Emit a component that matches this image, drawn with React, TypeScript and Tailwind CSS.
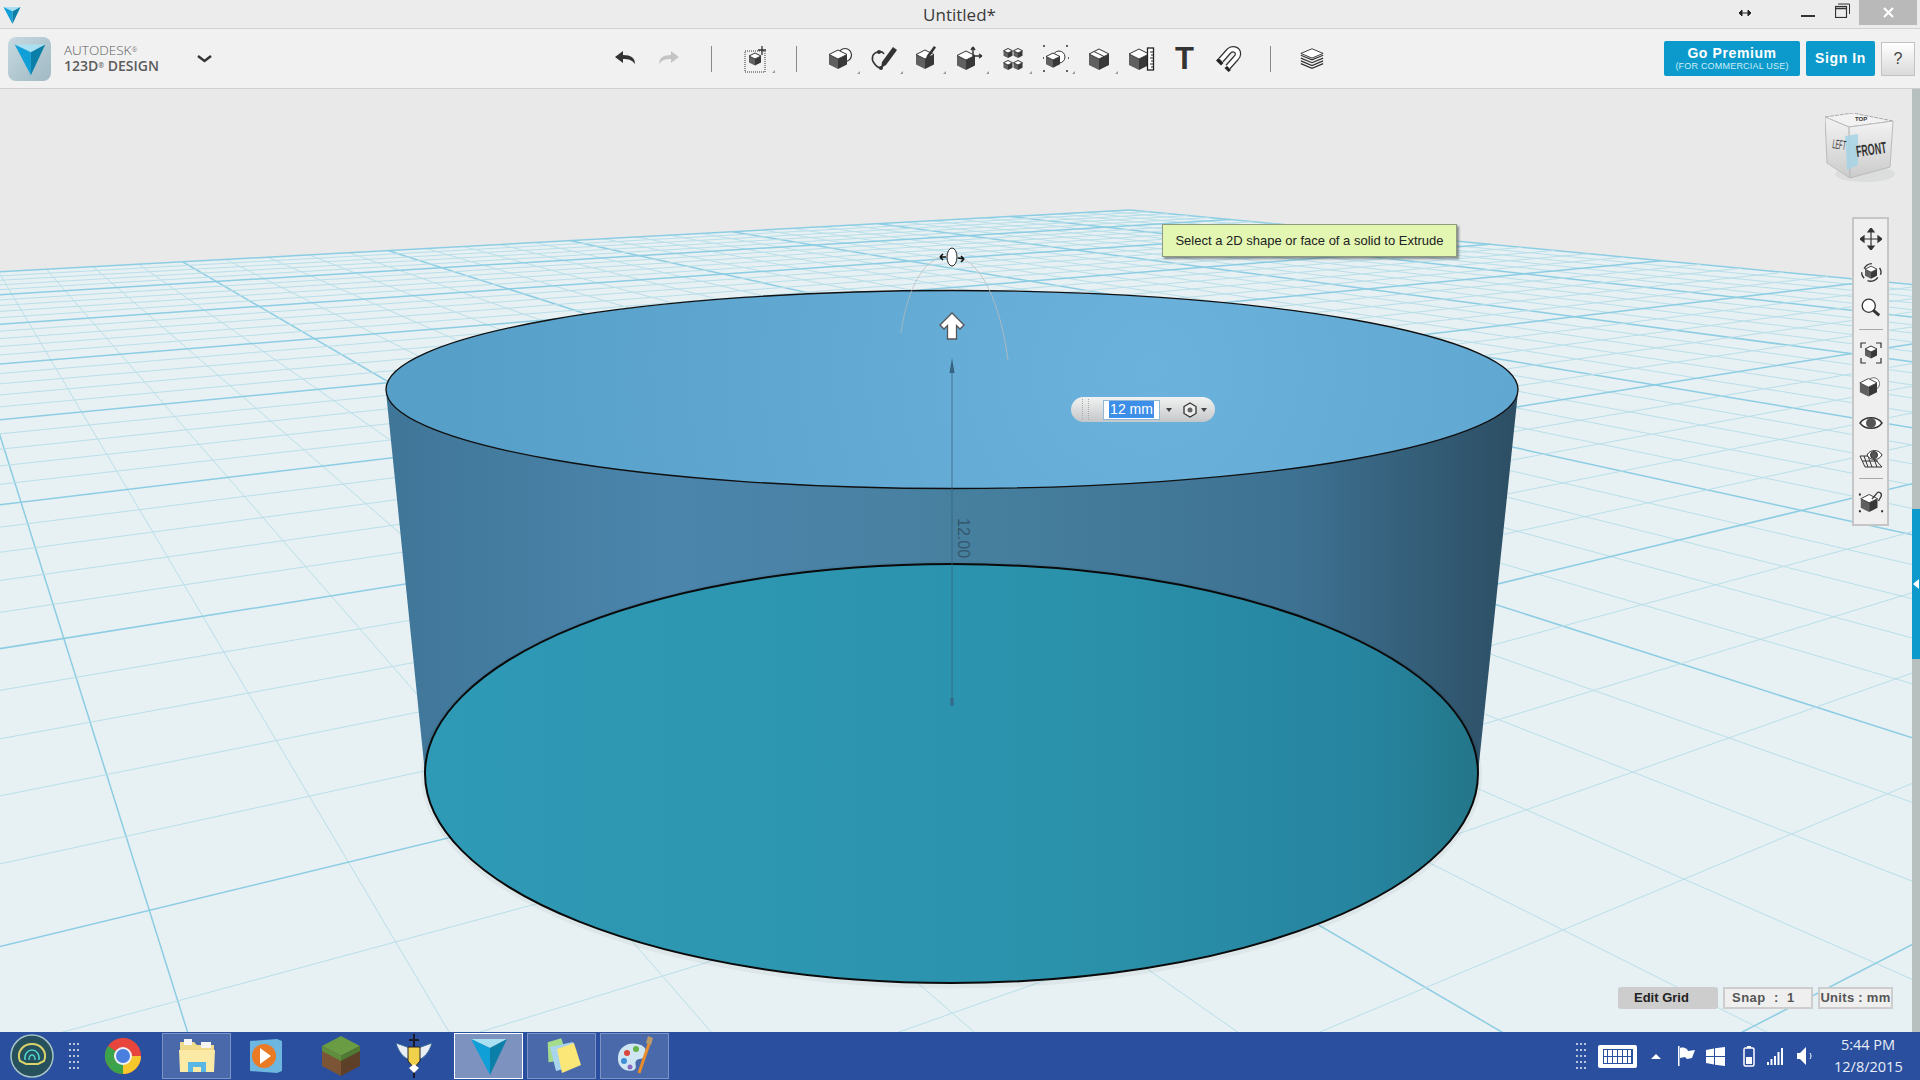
import React from 'react';

// grid plane homography, fitted by eye from the reference
const P0 = [1130, 210];
const VR = [3600, 75];
const VL = [-108, 92];
const A = -0.0462;
const B = -0.0751;

const project = (u: number, v: number) => {
  const tu = A * u;
  const tv = B * v;
  const w = 1 + tu + tv;
  return [(P0[0] + tu * VR[0] + tv * VL[0]) / w, (P0[1] + tu * VR[1] + tv * VL[1]) / w];
};

const gridLines = () => {
  const lines: { d: string; major: boolean }[] = [];
  for (let i = 0; i * 0.2 * -A < 0.97; i++) {
    const u = i * 0.2;
    const s = project(u, 0);
    const e = project(u, (0.98 + A * u) / -B);
    lines.push({ d: `M${s[0]} ${s[1]}L${e[0]} ${e[1]}`, major: i % 5 === 0 });
  }
  for (let i = 0; i * 0.2 * -B < 0.97; i++) {
    const v = i * 0.2;
    const s = project(0, v);
    const e = project((0.98 + B * v) / -A, v);
    lines.push({ d: `M${s[0]} ${s[1]}L${e[0]} ${e[1]}`, major: i % 5 === 0 });
  }
  return lines;
};

const Cube = ({ x, y, s }: { x: number; y: number; s: number }) => (
  <g strokeLinejoin="round">
    <polygon points={`${x - s},${y - s / 2} ${x},${y} ${x},${y + s * 1.1} ${x - s},${y + s * 0.6}`} fill="#606060" />
    <polygon points={`${x + s},${y - s / 2} ${x},${y} ${x},${y + s * 1.1} ${x + s},${y + s * 0.6}`} fill="#383838" />
    <polygon points={`${x},${y - s} ${x + s},${y - s / 2} ${x},${y} ${x - s},${y - s / 2}`} fill="#fff" stroke="#333" strokeWidth="1" />
  </g>
);

const Icon = ({ children, size = 28 }: { children: React.ReactNode; size?: number }) => (
  <svg width={size} height={size} viewBox="0 0 28 28" fill="none">
    {children}
  </svg>
);

const Logo = ({ w, h }: { w: number; h: number }) => (
  <svg width={w} height={h} viewBox="0 0 40 42">
    <polygon points="2,4 38,4 21,13" fill="#a9e1f2" />
    <polygon points="2,4 21,13 21,40" fill="#109fd6" />
    <polygon points="38,4 21,13 21,40" fill="#0c7fa8" />
  </svg>
);

const toolIcons = [
  // primitives
  <Icon key="a">
    <circle cx="18" cy="10" r="6.5" fill="#fff" stroke="#333" strokeWidth="1.2" />
    <Cube x={11} y={14} s={9} />
  </Icon>,
  // sketch
  <Icon key="b">
    <path d="M8 7C2 8 1 14 4 18c2 3 4 5 7 5" stroke="#333" strokeWidth="1.6" />
    <path d="M8 7c3-1 5 0 6 2" stroke="#333" strokeWidth="1.6" />
    <circle cx="9" cy="7" r="2" fill="#333" />
    <circle cx="11" cy="23" r="2" fill="#333" />
    <path d="M23 2l4 3-11 15-5 3 1-6z" fill="#333" />
  </Icon>,
  // construct
  <Icon key="c">
    <Cube x={12} y={14} s={9} />
    <path d="M21 1l2 1.500-7 10-3 1 1-3z" fill="#333" />
  </Icon>,
  // modify
  <Icon key="d">
    <Cube x={10} y={15} s={9} />
    <path d="M17 11V2M17 2l-2 3M17 2l2 3M17 11h9M26 11l-3-2M26 11l-3 2" stroke="#333" strokeWidth="1.4" />
  </Icon>,
  // pattern
  <Icon key="e">
    <Cube x={9} y={8} s={4.5} />
    <Cube x={19} y={8} s={4.5} />
    <Cube x={9} y={20} s={4.5} />
    <Cube x={19} y={20} s={4.5} />
  </Icon>,
  // grouping
  <Icon key="f">
    <circle cx="17" cy="12" r="6" fill="#fff" stroke="#333" strokeWidth="1" />
    <Cube x={11} y={15} s={7} />
    <path d="M1 1h3M24 1h3M1 26h3M24 26h2M1 13h1M26 13h1" stroke="#333" strokeWidth="1.6" strokeDasharray="2 1" />
  </Icon>,
  // combine
  <Icon key="g">
    <Cube x={14} y={14} s={10} />
    <path d="M9 6.500l10 5" stroke="#333" strokeWidth="1" />
  </Icon>,
  // measure
  <Icon key="h">
    <Cube x={11} y={14} s={10} />
    <rect x="19.500" y="3" width="6" height="22" fill="#fff" stroke="#222" strokeWidth="1.3" />
    <path d="M22 7h3M23 10h2M22 13h3M23 16h2M22 19h3M23 22h2" stroke="#222" />
  </Icon>,
  // text
  <span key="i" className="font-['Liberation_Sans'] text-[31px] leading-[28px] font-bold text-[#333]">T</span>,
  // snap
  <Icon key="j">
    <path d="M7 15L15 6c3-3 9-2 9 3 0 2-1 3-2 4l-8 9" stroke="#333" strokeWidth="6.5" />
    <path d="M7 15L15 6c3-3 9-2 9 3 0 2-1 3-2 4l-8 9" stroke="#fff" strokeWidth="4" />
    <path d="M4.500 13l5 5-2.500 2.500-5-5zM13 21l4 4-2.500 2-4-4z" fill="#222" />
  </Icon>,
];

const HasMenu = [true, true, true, true, true, true, true, false, false, false];

const Title = () => (
  <div className="relative flex h-[29px] items-center justify-center border-b border-[#d2d2d2] bg-[#ececec]">
    <div className="absolute top-[5px] left-[2px]">
      <Logo w={20} h={20} />
    </div>
    <span className="mt-[2px] ml-[-1px] text-[17px] text-[#3b3b3b]">Untitled*</span>
    <div className="absolute top-0 right-[3px] flex h-[25px] items-center">
      <svg width="14" height="8" viewBox="0 0 14 8">
        <path d="M1 4h12M1 4l3-3v6zM13 4l-3-3v6z" fill="#222" stroke="#222" />
      </svg>
      <div className="mt-[7px] ml-[49px] h-[2px] w-[14px] bg-[#333]" />
      <svg className="ml-[20px] mt-[-4px]" width="15" height="15" viewBox="0 0 15 15" fill="none" stroke="#333">
        <rect x="0.500" y="3.500" width="11" height="11" strokeWidth="1.2" />
        <path d="M0.500 5.500h11" strokeWidth="1.5" />
        <path d="M3 1h11.500v10" />
      </svg>
      <div className="ml-[9px] flex h-[25px] w-[58px] items-center justify-center bg-[#b9b9b9]">
        <svg width="11" height="11" viewBox="0 0 11 11" stroke="#fff" strokeWidth="2.2">
          <path d="M1 1l9 9M10 1l-9 9" />
        </svg>
      </div>
    </div>
  </div>
);

const Toolbar = () => (
  <div className="flex h-[60px] items-center border-b border-[#cfcfcf] bg-[#f1f1f1]">
    <div className="ml-2 flex h-[44px] w-[43px] items-center justify-center rounded-lg bg-gradient-to-br from-[#c7d9e0] to-[#9fb9c4]">
      <Logo w={34} h={36} />
    </div>
    <div className="ml-[13px] w-[133px] text-[#5c5c5c]">
      <div className="text-[13.5px] leading-[15px] font-light">AUTODESK<sup className="text-[7px]">®</sup></div>
      <div className="text-[14px] leading-[16px] font-semibold">123D<sup className="text-[7px]">®</sup> DESIGN</div>
    </div>
    <svg width="15" height="8" viewBox="0 0 15 8" fill="none" stroke="#333" strokeWidth="2.4">
      <path d="M1 1l6.500 5L14 1" />
    </svg>
    <svg className="ml-[403px] mt-[-2px]" width="22" height="13" viewBox="0 0 22 13">
      <path d="M8 0L0 6l8 6V8c6 0 9 1 12 5 0-6-4-9-12-9z" fill="#333" />
    </svg>
    <svg className="ml-[20px] mt-[-2px]" width="22" height="13" viewBox="0 0 22 13">
      <path d="M14 0l8 6-8 6V8C8 8 5 9 2 13c0-6 4-9 12-9z" fill="#c4c4c4" />
    </svg>
    <div className="ml-[32px] h-[26px] w-px bg-[#8a8a8a]" />
    <div className="relative ml-[32px] flex w-[24px] justify-center">
      <svg width="24" height="28" viewBox="0 0 24 28">
        <rect x="1" y="6" width="20" height="21" fill="none" stroke="#333" strokeDasharray="1 1" />
        <Cube x={11} y={14} s={6} />
        <path d="M18 1v9M14 5h8" stroke="#333" strokeWidth="1.3" />
      </svg>
      <span className="absolute top-[25px] left-[28px] h-0 w-0 border-b-[3px] border-l-[3px] border-b-[#999] border-l-transparent" />
    </div>
    <div className="ml-[28px] h-[26px] w-px bg-[#8a8a8a]" />
    <div className="ml-[22px] flex">
      {toolIcons.map((icon, i) => (
        <div key={i} className="relative flex h-[30px] w-[43px] items-center justify-center">
          {icon}
          {HasMenu[i] && (
            <span className="absolute top-[27px] right-[2px] h-0 w-0 border-b-[3px] border-l-[3px] border-b-[#999] border-l-transparent" />
          )}
        </div>
      ))}
    </div>
    <div className="ml-[21px] h-[26px] w-px bg-[#8a8a8a]" />
    <div className="ml-[28px]">
      <Icon size={26}>
        <polygon points="14,3 26,8 14,13 2,8" fill="#fff" stroke="#333" />
        <path d="M2 10l12 5 12-5M2 13l12 5 12-5M2 16l12 5 12-5M2 19l12 5 12-5" stroke="#333" strokeWidth="1.3" />
      </Icon>
    </div>
    <div className="ml-auto flex items-center">
      <div className="flex h-[35px] w-[136px] flex-col items-center justify-center rounded-[2px] bg-[#0b9acb] font-['Liberation_Sans'] text-white">
        <span className="text-[14px] leading-[15px] font-bold tracking-[0.6px]">Go Premium</span>
        <span className="text-[9px] leading-[11px] text-[#cdeefa] tracking-[0.2px]">(FOR COMMERCIAL USE)</span>
      </div>
      <div className="ml-[6px] flex h-[35px] w-[69px] items-center justify-center rounded-[2px] bg-[#0b9acb] font-['Liberation_Sans'] text-[14px] font-bold tracking-[0.6px] text-white">
        Sign In
      </div>
      <div className="mr-[5px] ml-[6px] flex h-[34px] w-[34px] items-center justify-center border border-[#c2c2c2] bg-gradient-to-b from-white to-[#dadada] font-['Liberation_Sans'] text-[16px] text-[#444]">
        ?
      </div>
    </div>
  </div>
);

const Scene = () => (
  <svg className="block" width="1912" height="943" viewBox="0 89 1912 943">
    <defs>
      <linearGradient id="wall" x1="386" x2="1518" y1="0" y2="0" gradientUnits="userSpaceOnUse">
        <stop offset="0" stopColor="#3f7698" />
        <stop offset="0.25" stopColor="#4c85ac" />
        <stop offset="0.5" stopColor="#47809f" />
        <stop offset="0.8" stopColor="#3e7293" />
        <stop offset="1" stopColor="#2c4e63" />
      </linearGradient>
      <radialGradient id="top" cx="1150" cy="370" r="700" gradientUnits="userSpaceOnUse">
        <stop offset="0" stopColor="#6bb2dc" />
        <stop offset="1" stopColor="#569fc8" />
      </radialGradient>
      <linearGradient id="floor" x1="425" x2="1478" y1="0" y2="0" gradientUnits="userSpaceOnUse">
        <stop offset="0" stopColor="#2f9ab6" />
        <stop offset="0.6" stopColor="#2b92ac" />
        <stop offset="0.9" stopColor="#26849f" />
        <stop offset="1" stopColor="#247688" />
      </linearGradient>
    </defs>
    <rect x="0" y="89" width="1912" height="943" fill="#e9e9e9" />
    <polygon points="1130,210 -100,277 -100,1100 2000,1100 2000,293" fill="#e7f0f3" />
    {gridLines().map((l, i) => (
      <path key={i} d={l.d} stroke={l.major ? '#8ccde3' : '#b9dfe9'} strokeWidth={l.major ? 1.5 : 1} fill="none" />
    ))}
    <path d="M386 392L425 773A526.5 209.5 0 0 0 1478 773L1518 392Z" fill="url(#wall)" />
    <ellipse cx="951.5" cy="775" rx="528" ry="211" fill="none" stroke="#000" strokeOpacity="0.04" strokeWidth="5" />
    <ellipse cx="951.5" cy="773.5" rx="526.5" ry="209.5" fill="url(#floor)" stroke="#0a0a0a" strokeWidth="2" />
    <ellipse cx="952" cy="389.5" rx="566" ry="99" fill="url(#top)" stroke="#101010" strokeWidth="1.3" />
    {/* extrude gizmo */}
    <path d="M901 333C908 285 925 258 945 257" stroke="#bbb" fill="none" strokeOpacity="0.7" />
    <path d="M958 257C980 262 1000 300 1008 360" stroke="#bbb" fill="none" strokeOpacity="0.8" />
    <ellipse cx="952" cy="257" rx="5" ry="9" fill="#fff" stroke="#222" />
    <path d="M946 257h-6M940 257l3-3M940 257l3 3M958 258l6 1M964 259l-3-3M964 259l-3 3" stroke="#111" strokeWidth="1.6" />
    <path d="M952 313L964 325L960 329L956.500 325.500V339H947.500V325.500L944 329L940 325Z" fill="#fff" stroke="#555" strokeWidth="1.3" />
    <path d="M952 372V704" stroke="#35627f" strokeOpacity="0.75" />
    <path d="M952 358l2.500 15h-5z" fill="#35627f" />
    <path d="M950 698h4v8h-4z" fill="#35627f" opacity="0.6" />
    <text transform="translate(958,518) rotate(90)" fontFamily="Liberation Sans" fontSize="16" fill="#33576c">12.00</text>
  </svg>
);

const ViewCube = () => (
  <svg width="72" height="74" viewBox="0 0 72 74">
    <defs>
      <linearGradient id="cubeL" x1="0" x2="0" y1="0" y2="1">
        <stop offset="0" stopColor="#f3f3f3" />
        <stop offset="1" stopColor="#cbcbcb" />
      </linearGradient>
    </defs>
    <ellipse cx="40" cy="61" rx="30" ry="8" fill="#cfd2d2" opacity="0.5" />
    <polygon points="0,4 28,0 68,8 24,14" fill="#f2f2f2" stroke="#aaa" strokeDasharray="4 1" />
    <polygon points="0,4 24,14 25,65 2,50" fill="url(#cubeL)" stroke="#bbb" />
    <polygon points="24,14 68,8 65,54 25,65" fill="url(#cubeL)" stroke="#bbb" />
    <polygon points="20,23 33,21 33,52 22,57" fill="#a6d3e4" opacity="0.85" />
    <text transform="translate(30,8) scale(0.6,0.5)" fontFamily="Liberation Sans" fontSize="10" fontWeight="bold" fill="#333">TOP</text>
    <text transform="translate(7,35) rotate(8) scale(0.42,1)" fontFamily="Liberation Sans" fontSize="13" fill="#333">LEFT</text>
    <text transform="translate(32,44) rotate(-8) scale(0.55,1)" fontFamily="Liberation Sans" fontSize="16" fontWeight="bold" fill="#333">FRONT</text>
  </svg>
);

const NavSlot = ({ h, children }: { h: string; children: React.ReactNode }) => (
  <div className={`flex items-center justify-center ${h}`}>{children}</div>
);

const NavPanel = () => (
  <div className="flex h-[309px] w-[37px] flex-col items-center border-2 border-[#c6c6c6] bg-[#efefef] pt-[3px]">
    <NavSlot h="h-[34px]">
      <svg width="22" height="22" viewBox="0 0 22 22" fill="none" stroke="#333" strokeWidth="1.2">
        <path d="M11 1v20M1 11h20" />
        <path d="M11 0l-3 4h6zM11 22l-3-4h6zM0 11l4-3v6zM22 11l-4-3v6z" fill="#333" />
      </svg>
    </NavSlot>
    <NavSlot h="h-[34px]">
      <Icon size={24}>
        <Cube x={14} y={13} s={7} />
        <path d="M6 9a10 10 0 0 1 9-6M22 19a10 10 0 0 1-12 4M24 8c2 3 2 6 1 8M3 13c0 3 1 5 3 7" stroke="#333" strokeWidth="1.6" />
      </Icon>
    </NavSlot>
    <NavSlot h="h-[35px]">
      <svg width="21" height="21" viewBox="0 0 24 24">
        <circle cx="10" cy="10" r="7.500" fill="#fff" stroke="#333" strokeWidth="1.5" />
        <path d="M15 15l7 6" stroke="#333" strokeWidth="3.4" />
      </svg>
    </NavSlot>
    <div className="mt-[4px] h-px w-[24px] bg-[#aaa]" />
    <div className="h-[5px]" />
    <NavSlot h="h-[35px]">
      <svg width="22" height="22" viewBox="0 0 22 22" fill="none">
        <path d="M1 6V1h5M16 1h5v5M1 16v5h5M16 21h5v-5" stroke="#333" strokeWidth="1.2" />
        <Cube x={11} y={10} s={6} />
      </svg>
    </NavSlot>
    <NavSlot h="h-[35px]">
      <Icon size={24}>
        <circle cx="17" cy="9" r="7" fill="#fff" stroke="#555" />
        <Cube x={11} y={13} s={10} />
      </Icon>
    </NavSlot>
    <NavSlot h="h-[35px]">
      <svg width="24" height="16" viewBox="0 0 24 16">
        <path d="M1 8C6 1 18 1 23 8 18 15 6 15 1 8z" fill="#fff" stroke="#333" strokeWidth="1.4" />
        <circle cx="12" cy="8" r="5" fill="#555" />
      </svg>
    </NavSlot>
    <NavSlot h="h-[35px]">
      <svg width="24" height="20" viewBox="0 0 24 20" fill="none" stroke="#333">
        <path d="M1 8h12l10 11H6zM3.500 13H19M9 8l4 11M5 8l4 11M15 11l3 8" />
        <path d="M8 7C11 1 20 1 23 7 20 13 11 13 8 7z" fill="#fff" />
        <circle cx="15" cy="7" r="3.500" fill="#555" />
      </svg>
    </NavSlot>
    <div className="mt-[3px] h-px w-[24px] bg-[#aaa]" />
    <div className="h-[4px]" />
    <NavSlot h="h-[36px]">
      <Icon size={26}>
        <Cube x={12} y={16} s={9} />
        <path d="M15 12L20 6c2-3 6-1 5 3l-3 5" stroke="#333" strokeWidth="1.4" />
        <path d="M1 7h2M1 25h2M25 25h2" stroke="#222" strokeWidth="2" />
      </Icon>
    </NavSlot>
  </div>
);

const TaskIcons = {
  orb: (
    <svg width="44" height="44" viewBox="0 0 44 44" fill="none">
      <circle cx="22" cy="22" r="21" fill="#26505c" stroke="#a6c3c6" strokeWidth="1.5" />
      <path d="M10 27c-4-10 4-17 12-17s16 7 12 17l-6 3H16z" stroke="#d9d36a" strokeWidth="2" />
      <path d="M15 26c-1-6 3-10 7-10s8 4 7 10M19 26c0-3 1-5 3-5s3 2 3 5" stroke="#4dd0c8" strokeWidth="1.5" />
    </svg>
  ),
  chrome: (
    <svg width="38" height="38" viewBox="0 0 38 38">
      <circle cx="19" cy="19" r="18" fill="#e8453c" />
      <path d="M19 19L3.400 28A18 18 0 0 1 4 9z" fill="#3ba34a" />
      <path d="M19 19L37 19A18 18 0 0 1 19 37L12 27z" fill="#f7c72e" />
      <path d="M19 37A18 18 0 0 1 3.400 28L19 19z" fill="#3ba34a" />
      <circle cx="19" cy="19" r="9" fill="#f2f2f2" />
      <circle cx="19" cy="19" r="7" fill="#4a7fe0" />
    </svg>
  ),
  folder: (
    <svg width="40" height="40" viewBox="0 0 40 40">
      <path d="M3 6h14l3 3h17v26H3z" fill="#efd98a" />
      <rect x="7" y="3" width="8" height="6" fill="#f5f5f5" />
      <rect x="24" y="6" width="10" height="6" fill="#f5f5f5" />
      <path d="M2 14h36l-1 22H3z" fill="#fbeaa6" />
      <path d="M11 36V26h18v10h-5v-5h-8v5z" fill="#58b7e4" />
    </svg>
  ),
  wmp: (
    <svg width="34" height="38" viewBox="0 0 34 38">
      <path d="M1 4l27-2 5 2v30l-5 2-27-2z" fill="#6db6e0" />
      <circle cx="15" cy="19" r="12" fill="#ea7a24" />
      <path d="M11 11l11 8-11 8z" fill="#fff" />
    </svg>
  ),
  grass: (
    <svg width="40" height="42" viewBox="0 0 40 42">
      <polygon points="20,1 39,11 20,21 1,11" fill="#6a9c44" />
      <polygon points="1,11 20,21 20,41 1,31" fill="#7c5537" />
      <polygon points="39,11 20,21 20,41 39,31" fill="#5e4029" />
      <polygon points="1,11 20,21 20,26 1,16" fill="#5f8f3d" />
      <polygon points="39,11 20,21 20,26 39,16" fill="#4e7a32" />
    </svg>
  ),
  wings: (
    <svg width="38" height="44" viewBox="0 0 38 44">
      <path d="M19 0v44" stroke="#1a1a2a" strokeWidth="2" />
      <path d="M14 6h10" stroke="#1a1a2a" strokeWidth="2" />
      <path d="M1 9c3 10 8 15 14 17v-12zM37 9c-3 10-8 15-14 17v-12z" fill="#e9eef4" stroke="#3a6a9a" />
      <path d="M13 13h12v14l-6 7-6-7z" fill="#f0cf4a" stroke="#222" />
      <path d="M19 30l5 4-5 5-5-5z" fill="#fff" />
    </svg>
  ),
  sticky: (
    <svg width="42" height="38" viewBox="0 0 42 38">
      <polygon points="8,4 22,2 26,24 6,24" fill="#a4dc8c" transform="rotate(-8 16 14)" />
      <polygon points="9,10 32,5 38,28 15,34" fill="#a9d4ee" />
      <polygon points="16,12 33,6 40,28 21,36" fill="#fbe678" />
    </svg>
  ),
  paint: (
    <svg width="40" height="42" viewBox="0 0 40 42">
      <path d="M3 22C4 10 16 6 26 10c6 3 6 8 3 12-3 3-6 1-8 4-2 3 2 6-2 9-7 3-17-2-16-13z" fill="#cfe6f2" />
      <circle cx="12" cy="18" r="3" fill="#d8463c" />
      <circle cx="21" cy="14" r="3" fill="#64b447" />
      <circle cx="9" cy="26" r="3" fill="#3f8fd6" />
      <circle cx="15" cy="32" r="2.500" fill="#8a6ac0" />
      <path d="M35 6L24 38" stroke="#e98d2b" strokeWidth="3" />
      <path d="M33 1l5 2-2 7-5-2z" fill="#b99a68" />
    </svg>
  ),
};

const TaskButton = ({ active, children }: { active?: boolean; children: React.ReactNode }) => (
  <div
    className={`flex h-[46px] w-[69px] items-center justify-center border ${
      active ? 'border-white bg-[#7e92bf]' : 'border-[#7d93c4] bg-[#4a69ab]'
    }`}
  >
    {children}
  </div>
);

const Gripper = () => (
  <div className="grid w-[11px] grid-cols-3 gap-x-px gap-y-[4px]">
    {Array.from({ length: 15 }).map((_, i) => (
      <span key={i} className="h-[2px] w-[2px] bg-[#b9c5df]" />
    ))}
  </div>
);

const Tray = () => (
  <div className="ml-auto flex items-center">
    <Gripper />
    <div className="ml-[11px] flex h-[23px] w-[39px] items-center justify-center rounded-[2px] bg-white">
      <div className="grid h-[15px] w-[30px] grid-cols-6 gap-px border border-[#2a4f9f] bg-[#2a4f9f]">
        {Array.from({ length: 12 }).map((_, i) => (
          <span key={i} className="bg-white" />
        ))}
      </div>
    </div>
    <span className="ml-[14px] h-0 w-0 border-r-[5px] border-b-[5px] border-l-[5px] border-r-transparent border-b-white border-l-transparent" />
    <svg className="ml-[16px]" width="19" height="20" viewBox="0 0 19 20" fill="#fff">
      <path d="M1 0h1.500v20H1zM3 2c3-1 5 0 7 1l1 2 7-1-3 8-5 1-2-2-5 1z" />
    </svg>
    <svg className="ml-[10px]" width="19" height="19" viewBox="0 0 19 19" fill="#fff">
      <path d="M0 3l8-1.500V9H0zM9 1.300L19 0v9H9zM0 10h8v7.500L0 16zM9 10h10v9L9 17.700z" />
    </svg>
    <svg className="ml-[18px]" width="12" height="21" viewBox="0 0 12 21" fill="none">
      <rect x="1" y="2" width="10" height="18" rx="1.500" stroke="#fff" strokeWidth="1.5" />
      <rect x="3" y="11" width="6" height="7" fill="#fff" />
      <rect x="4" y="0" width="4" height="2" fill="#fff" />
    </svg>
    <svg className="ml-[12px]" width="16" height="17" viewBox="0 0 16 17" fill="#fff">
      <path d="M0 14h2v3H0zM3.500 11h2v6h-2zM7 8h2v9H7zM10.500 4h2v13h-2zM14 0h2v17h-2z" />
    </svg>
    <svg className="ml-[14px]" width="16" height="20" viewBox="0 0 16 20" fill="none">
      <path d="M0 7h3l6-6v18l-6-6H0z" fill="#fff" />
      <path d="M13 7c1.300 2 1.300 4 0 6" stroke="#fff" />
    </svg>
    <div className="mr-[18px] ml-[21px] w-[68px] text-center text-[14.5px] leading-[22px] text-[#e8edf6]">
      <div>5:44 PM</div>
      <div>12/8/2015</div>
    </div>
  </div>
);

const Taskbar = () => (
  <div className="flex h-12 items-center bg-[#2a4f9f]">
    <div className="flex w-[62px] justify-center pl-[1px]">{TaskIcons.orb}</div>
    <div className="flex w-[24px] justify-center">
      <Gripper />
    </div>
    <div className="flex w-[74px] justify-center">{TaskIcons.chrome}</div>
    <div className="ml-[2px]">
      <TaskButton>{TaskIcons.folder}</TaskButton>
    </div>
    <div className="flex w-[70px] justify-center">{TaskIcons.wmp}</div>
    <div className="flex w-[80px] justify-center">{TaskIcons.grass}</div>
    <div className="flex w-[66px] justify-center">{TaskIcons.wings}</div>
    <div className="ml-[7px]">
      <TaskButton active>
        <Logo w={44} h={42} />
      </TaskButton>
    </div>
    <div className="ml-[4px]">
      <TaskButton>{TaskIcons.sticky}</TaskButton>
    </div>
    <div className="ml-[4px]">
      <TaskButton>{TaskIcons.paint}</TaskButton>
    </div>
    <Tray />
  </div>
);

export default function App() {
  return (
    <div className="flex h-[1080px] w-[1920px] flex-col overflow-hidden font-['Open_Sans',sans-serif]">
      <Title />
      <Toolbar />
      <div className="flex flex-1">
        <div className="relative flex-1">
          <Scene />

          {/* hint */}
          <div className="absolute top-[135px] left-[1162px] flex h-[33px] w-[295px] items-center justify-center border border-[#8f9a80] bg-[#e3f6b2] font-['Liberation_Sans'] text-[13px] text-[#222] shadow-[2px_2px_2px_rgba(70,80,80,0.6)]">
            Select a 2D shape or face of a solid to Extrude
          </div>

          {/* distance input */}
          <div className="absolute top-[308px] left-[1071px] flex h-[25px] w-[144px] items-center rounded-full bg-gradient-to-b from-[#f2f2f2] to-[#c4c7c9] font-['Liberation_Sans']">
            <div className="ml-[11px] h-[21px] w-[7px] border-r border-l border-dotted border-[#aaa]" />
            <div className="ml-[14px] flex h-[20px] w-[57px] items-center justify-center border border-[#8fb7d8] bg-white text-[14px]">
              <span className="bg-[#3d8ee8] px-px leading-[17px] text-white">12 mm</span>
            </div>
            <span className="ml-[6px] h-0 w-0 border-t-[4px] border-r-[3px] border-l-[3px] border-t-[#444] border-r-transparent border-l-transparent" />
            <svg className="ml-[10px]" width="16" height="16" viewBox="0 0 16 16">
              <polygon points="8,1 14,4.500 14,11.500 8,15 2,11.500 2,4.500" fill="#eee" stroke="#333" strokeWidth="1.3" />
              <circle cx="8" cy="8" r="2.500" fill="#666" />
            </svg>
            <span className="ml-[3px] h-0 w-0 border-t-[4px] border-r-[3px] border-l-[3px] border-t-[#444] border-r-transparent border-l-transparent" />
          </div>

          <div className="absolute top-[24px] right-[15px]">
            <ViewCube />
          </div>

          <div className="absolute top-[128px] right-[23px]">
            <NavPanel />
          </div>

          {/* grid status */}
          <div className="absolute top-[898px] right-[19px] flex h-[22px] items-center gap-[5px] font-['Liberation_Sans'] text-[13px] font-bold">
            <div className="flex h-[22px] w-[100px] items-center rounded-[3px] bg-[#cdcdcd] pl-[16px] text-[#222]">
              Edit Grid
            </div>
            <div className="h-[22px] w-[90px] border-2 border-[#cdcdcd] bg-[#efefef] pl-[7px] leading-[18px] tracking-[0.5px] text-[#555] whitespace-pre">
              Snap  :  1
            </div>
            <div className="flex h-[22px] w-[75px] items-center justify-center border-2 border-[#cdcdcd] bg-[#efefef] text-[#555] tracking-[0.3px]">
              Units : mm
            </div>
          </div>
        </div>

        {/* side strip */}
        <div className="flex w-2 flex-col bg-[#b8bfbf]">
          <div className="h-[420px]" />
          <div className="flex h-[150px] items-center justify-center bg-[#0b9acb]">
            <span className="h-0 w-0 border-t-[5px] border-r-[6px] border-b-[5px] border-t-transparent border-r-white border-b-transparent" />
          </div>
        </div>
      </div>
      <Taskbar />
    </div>
  );
}
